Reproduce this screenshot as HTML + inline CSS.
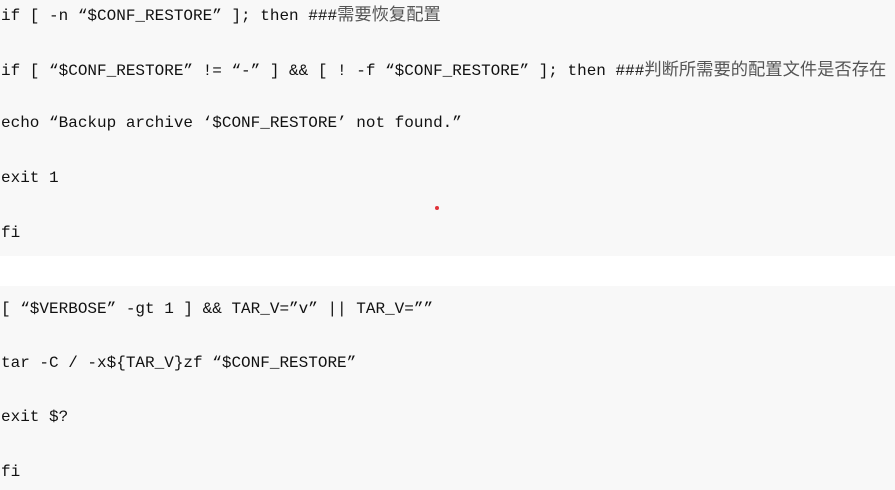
<!DOCTYPE html>
<html><head><meta charset="utf-8"><style>
body{margin:0;width:895px;height:490px;background:#fff;overflow:hidden;position:relative;font-family:"Liberation Mono","Noto Sans CJK SC",monospace;font-size:16px;color:#111}
.b{position:absolute;left:0;width:895px;background:#f8f8f8}
.l{position:absolute;left:1px;height:20px;line-height:20px;white-space:pre}
.c{font-family:"Noto Sans CJK SC",sans-serif;color:#555;font-size:17.3px}
</style></head><body>
<div class="b" style="top:0;height:256px"></div>
<div class="b" style="top:286px;height:204px"></div>
<div class="l" style="top:3px">if [ -n “$CONF_RESTORE” ]; then ###<span class="c">需要恢复配置</span></div>
<div class="l" style="top:58px">if [ “$CONF_RESTORE” != “-” ] &amp;&amp; [ ! -f “$CONF_RESTORE” ]; then ###<span class="c">判断所需要的配置文件是否存在</span></div>
<div class="l" style="top:113px">echo “Backup archive ‘$CONF_RESTORE’ not found.”</div>
<div class="l" style="top:168px">exit 1</div>
<div class="l" style="top:223px">fi</div>
<div class="l" style="top:299px">[ “$VERBOSE” -gt 1 ] &amp;&amp; TAR_V=”v” || TAR_V=””</div>
<div class="l" style="top:353px">tar -C / -x${TAR_V}zf “$CONF_RESTORE”</div>
<div class="l" style="top:407px">exit $?</div>
<div class="l" style="top:462px">fi</div>
<div style="position:absolute;left:435px;top:206px;width:4px;height:4px;border-radius:50%;background:#e0333a"></div>
</body></html>
